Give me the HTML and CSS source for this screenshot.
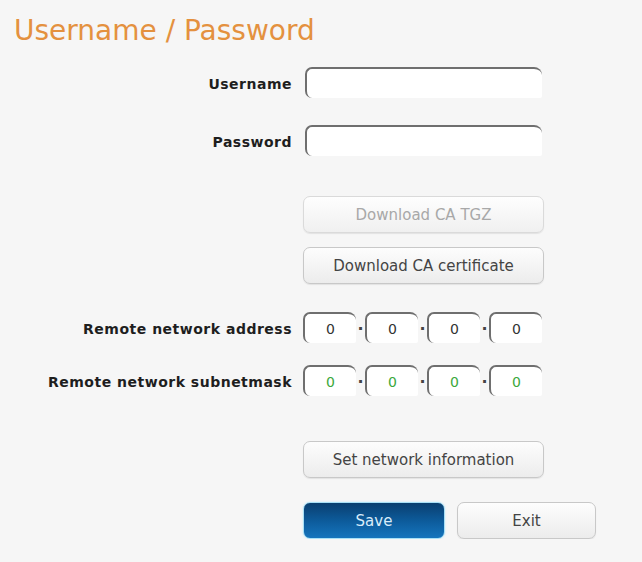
FILE: index.html
```html
<!DOCTYPE html>
<html lang="en">
<head>
  <meta charset="UTF-8">
  <title>Username / Password</title>
  <link rel="stylesheet" href="styles.css">
</head>
<body>
  <h1 class="title">Username / Password</h1>

  <form class="form">
    <label class="label row-user" for="user">Username</label>
    <input class="text row-user" id="user" type="text">

    <label class="label row-pass" for="pass">Password</label>
    <input class="text row-pass" id="pass" type="password">

    <div class="field row-tgz">
      <button type="button" class="btn wide" disabled>Download CA TGZ</button>
    </div>
    <div class="field row-cert">
      <button type="button" class="btn wide">Download CA certificate</button>
    </div>

    <label class="label row-addr">Remote network address</label>
    <div class="ip row-addr">
      <input class="octet" value="0"><span class="dot">·</span><input class="octet" value="0"><span class="dot">·</span><input class="octet" value="0"><span class="dot">·</span><input class="octet" value="0">
    </div>

    <label class="label row-mask">Remote network subnetmask</label>
    <div class="ip row-mask mask">
      <input class="octet" value="0"><span class="dot">·</span><input class="octet" value="0"><span class="dot">·</span><input class="octet" value="0"><span class="dot">·</span><input class="octet" value="0">
    </div>

    <div class="field row-set">
      <button type="button" class="btn wide">Set network information</button>
    </div>

    <div class="field row-save actions">
      <button type="button" class="btn primary">Save</button>
      <button type="button" class="btn exit">Exit</button>
    </div>
  </form>
</body>
</html>
```

FILE: styles.css
```css
*, *::before, *::after {
  box-sizing: border-box;
}

body {
  margin: 0;
  background-color: #f6f6f6;
  font-family: 'DejaVu Sans', Verdana, sans-serif;
  color: #333;
}

.title {
  margin: 0;
  padding: 14px 0 0 14px;
  font-size: 28px;
  font-weight: normal;
  color: #e4913f;
  line-height: 34px;
}

.form {
  display: grid;
  grid-template-columns: 292px auto;
  column-gap: 11px;
  align-items: center;
}

.label {
  grid-column: 1;
  text-align: right;
  font-weight: bold;
  font-size: 14px;
  letter-spacing: 0.5px;
  color: #1e1e1e;
  padding-top: 3px;
}

.text, .ip, .field {
  grid-column: 2;
}

/* row spacing */
.row-user { margin-top: 19px; }
.row-pass { margin-top: 27px; }
.row-tgz  { margin-top: 40px; }
.row-cert { margin-top: 14px; }
.row-addr { margin-top: 28px; }
.row-mask { margin-top: 22px; }
.row-set  { margin-top: 45px; }
.row-save { margin-top: 24px; }

.text, .octet {
  height: 31px;
  background-color: #fff;
  border: none;
  border-top: 2px solid #6f6f6f;
  border-left: 2px solid #6f6f6f;
  border-radius: 7px 8px 2px 7px;
  font-family: inherit;
  font-size: 14px;
  padding: 0 6px;
  outline: none;
}

.text {
  width: 237px;
  margin-left: 2px;
}

.ip {
  display: flex;
  align-items: center;
}

.octet {
  width: 53px;
  text-align: center;
  color: #333;
}

.mask .octet {
  color: #3ca83c;
}

.dot {
  width: 9px;
  text-align: center;
  font-size: 16px;
  font-weight: bold;
  line-height: 1;
  padding-top: 2px;
  color: #444;
}

.btn {
  height: 37px;
  border: 1px solid #c8c8c8;
  border-radius: 7px;
  background: linear-gradient(#fdfdfd, #ececec);
  box-shadow: 0 1px 1px rgba(0,0,0,0.08);
  font-family: inherit;
  font-size: 15px;
  color: #444;
  cursor: pointer;
}

.btn.wide {
  width: 241px;
}

.btn:disabled {
  color: #a8a8a8;
  border-color: #dadada;
  background: linear-gradient(#fefefe, #f0f0f0);
  cursor: default;
}

.actions {
  display: flex;
  gap: 12px;
}

.btn.primary {
  width: 142px;
  border: 1px solid #a9e0f6;
  background: linear-gradient(#0a3f70, #0d5d9e 55%, #1675bd);
  color: #d9ecfa;
  box-shadow: 0 0 2px #bfeaff;
}

.btn.exit {
  width: 139px;
}
```
